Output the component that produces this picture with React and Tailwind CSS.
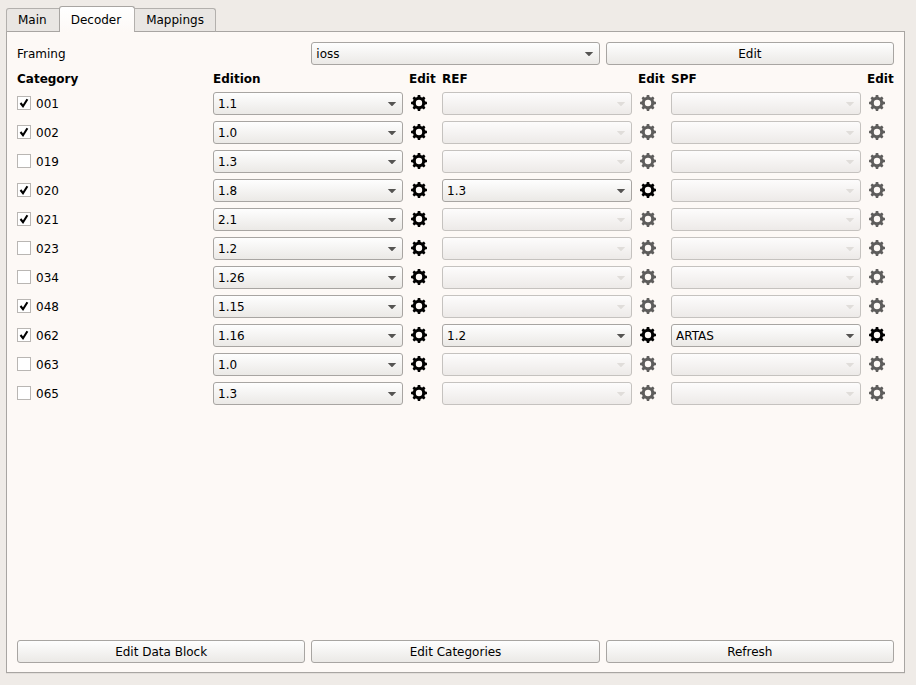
import { useState } from "react";

const ROWS = [
  { id: "001", on: true, edition: "1.1" },
  { id: "002", on: true, edition: "1.0" },
  { id: "019", on: false, edition: "1.3" },
  { id: "020", on: true, edition: "1.8", ref: "1.3" },
  { id: "021", on: true, edition: "2.1" },
  { id: "023", on: false, edition: "1.2" },
  { id: "034", on: false, edition: "1.26" },
  { id: "048", on: true, edition: "1.15" },
  { id: "062", on: true, edition: "1.16", ref: "1.2", spf: "ARTAS" },
  { id: "063", on: false, edition: "1.0" },
  { id: "065", on: false, edition: "1.3" },
];

const TEETH = [0, 45, 90, 135, 180, 225, 270, 315];

function Combo({ id, label, value }) {
  const disabled = value === undefined;
  return (
    <div className="relative min-w-0">
      <select
        id={id}
        aria-label={label}
        disabled={disabled}
        className="block h-[23px] w-full appearance-none rounded-[3px] border border-[#a8a5a2] bg-linear-to-b from-[#fefefe] to-[#ebe9e6] pl-1 pr-5 text-xs text-black disabled:border-[#c5c2bf] disabled:from-[#fdfcfc] disabled:to-[#edeae8] disabled:opacity-100"
      >
        <option>{value ?? ""}</option>
      </select>
      <svg
        className={`pointer-events-none absolute right-[6px] top-[10px] ${disabled ? "text-[#e0ddda]" : "text-[#555452]"}`}
        width="10"
        height="5"
        viewBox="0 0 10 5"
        aria-hidden="true"
      >
        <path d="M0.8 0h8.4L5.6 3.8Q5 4.4 4.4 3.8Z" fill="currentColor" />
      </svg>
    </div>
  );
}

function GearButton({ label, disabled }) {
  return (
    <button
      type="button"
      aria-label={label}
      disabled={disabled}
      className="block h-[22px] px-0.5 text-black disabled:text-[#5e5d5c]"
    >
      <svg width="16" height="16" viewBox="0 0 16 16" aria-hidden="true">
        <circle cx="8" cy="8" r="4.7" fill="none" stroke="currentColor" strokeWidth="3" />
        {TEETH.map((angle) => (
          <path
            key={angle}
            d="M6.2 3L6.7 0.4Q6.8 0 7.2 0H8.8Q9.2 0 9.3 0.4L9.8 3Z"
            fill="currentColor"
            transform={`rotate(${angle} 8 8)`}
          />
        ))}
      </svg>
    </button>
  );
}

function PushButton({ children }) {
  return (
    <button
      type="button"
      className="h-[23px] rounded-[3px] border border-[#a8a5a2] bg-linear-to-b from-[#fefefe] to-[#ebe9e6] text-center text-xs text-black"
    >
      {children}
    </button>
  );
}

function CategoryCheck({ id, initial }) {
  const [checked, setChecked] = useState(initial);
  return (
    <label className="flex items-start gap-[5px] pt-1">
      <span className="grid size-[14px] shrink-0">
        <input
          type="checkbox"
          checked={checked}
          onChange={(e) => setChecked(e.target.checked)}
          className="col-start-1 row-start-1 size-[14px] appearance-none border border-[#b9b6b3] bg-white"
        />
        {checked && (
          <svg
            className="pointer-events-none z-10 col-start-1 row-start-1"
            width="14"
            height="14"
            viewBox="0 0 14 14"
            aria-hidden="true"
          >
            <path d="M3.5 7L6 10.2L10.4 3.2" fill="none" stroke="#000" strokeWidth="2.1" />
          </svg>
        )}
      </span>
      {id}
    </label>
  );
}

export default function App() {
  return (
    <div className="flex min-h-screen flex-col bg-[#efebe7] pb-3 pl-[6px] pr-[11px] pt-[6px] font-['DejaVu_Sans',sans-serif] text-xs text-black">
      <div role="tablist" className="z-10 -mb-px flex items-end">
        <button
          type="button"
          role="tab"
          aria-selected="false"
          className="h-6 rounded-tl-[3px] border border-[#b3b0ad] border-b-[#a8a5a2] bg-[#e9e6e3] pl-[11px] pr-3"
        >
          Main
        </button>
        <button
          type="button"
          role="tab"
          aria-selected="true"
          className="-ml-px h-[26px] rounded-t-[3px] border border-b-0 border-[#a8a5a2] bg-linear-to-b from-white to-[#fdf9f6] pl-[11px] pr-[13px]"
        >
          Decoder
        </button>
        <button
          type="button"
          role="tab"
          aria-selected="false"
          className="-ml-px h-6 rounded-tr-[3px] border border-[#b3b0ad] border-b-[#a8a5a2] bg-[#e9e6e3] px-[11px]"
        >
          Mappings
        </button>
      </div>

      <main className="flex grow flex-col border border-[#a8a5a2] bg-[#fdf9f6] px-[10px] pb-[9px] pt-[10px] shadow-[0_1px_0_#e2deda]">
        <div className="grid grid-cols-3 items-center gap-1.5">
          <label htmlFor="framing">Framing</label>
          <Combo id="framing" value="ioss" />
          <PushButton>Edit</PushButton>
        </div>

        <table className="mt-1.5 grid grid-cols-[1fr_1fr_27px_1fr_27px_1fr_27px] grid-rows-[15px] gap-1.5">
          <thead className="contents">
            <tr className="contents text-left leading-[17px]">
              <th>Category</th>
              <th>Edition</th>
              <th>Edit</th>
              <th>REF</th>
              <th>Edit</th>
              <th>SPF</th>
              <th>Edit</th>
            </tr>
          </thead>
          <tbody className="contents">
            {ROWS.map((row) => (
              <tr key={row.id} className="contents">
                <td>
                  <CategoryCheck id={row.id} initial={row.on} />
                </td>
                <td>
                  <Combo label={`Edition ${row.id}`} value={row.edition} />
                </td>
                <td>
                  <GearButton label={`Edit edition ${row.id}`} />
                </td>
                <td>
                  <Combo label={`REF ${row.id}`} value={row.ref} />
                </td>
                <td>
                  <GearButton label={`Edit REF ${row.id}`} disabled={!row.ref} />
                </td>
                <td>
                  <Combo label={`SPF ${row.id}`} value={row.spf} />
                </td>
                <td>
                  <GearButton label={`Edit SPF ${row.id}`} disabled={!row.spf} />
                </td>
              </tr>
            ))}
          </tbody>
        </table>

        <div className="mt-auto grid grid-cols-3 gap-1.5">
          <PushButton>Edit Data Block</PushButton>
          <PushButton>Edit Categories</PushButton>
          <PushButton>Refresh</PushButton>
        </div>
      </main>
    </div>
  );
}
